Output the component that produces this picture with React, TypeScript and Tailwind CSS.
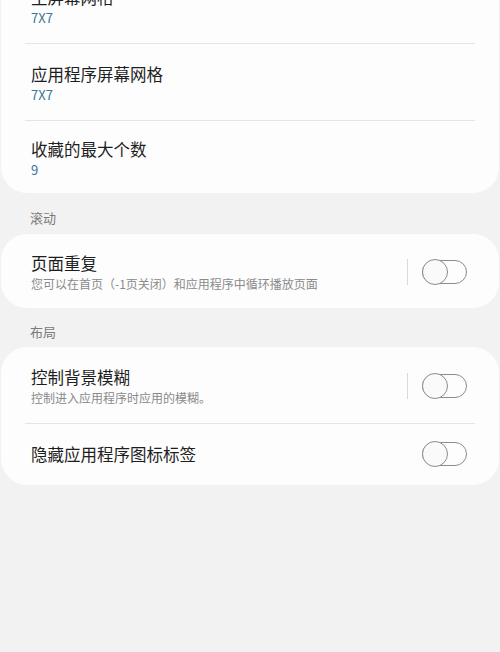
import React from 'react'

const font = { fontFamily: '"Noto Sans CJK SC", "Noto Sans", sans-serif' }

function Toggle({ divider }: { divider?: boolean }) {
  return (
    <div className="flex items-center shrink-0">
      {divider && <div className="w-px h-[26px] bg-[#d9d9d9] mr-[14px]" />}
      <div className="relative w-[45px] h-[26px] flex items-center">
        <div className="absolute left-0 right-0 h-[24px] rounded-full border-[1.5px] border-[#8c8c8c]" />
        <div className="absolute left-0 w-[26px] h-[26px] rounded-full border-[1.5px] border-[#8c8c8c] bg-[#fafafa]" />
      </div>
    </div>
  )
}

function Divider() {
  return <div className="mx-[24px] h-px bg-[#e5e5e5]" />
}

function ValueItem({ title, value, className }: { title: string; value: string; className: string }) {
  return (
    <div className={`px-[30px] ${className}`}>
      <div className="text-[16.5px] leading-[24px] text-[#1e1e1e]">{title}</div>
      <div className="text-[13px] leading-[18px] text-[#3b7795]">{value}</div>
    </div>
  )
}

function SwitchItem({
  title,
  desc,
  divider,
  className,
}: {
  title: string
  desc?: string
  divider?: boolean
  className: string
}) {
  return (
    <div className={`flex items-center pl-[30px] pr-[32px] ${className}`}>
      <div className="flex-1 min-w-0">
        <div className="text-[16.5px] leading-[24px] text-[#1e1e1e]">{title}</div>
        {desc && <div className="text-[12px] leading-[18px] text-[#8a8a8a]">{desc}</div>}
      </div>
      <Toggle divider={divider} />
    </div>
  )
}

function Header({ label, className }: { label: string; className: string }) {
  return <div className={`px-[30px] text-[13px] leading-[18px] text-[#7a7a7a] ${className}`}>{label}</div>
}

export default function App() {
  return (
    <div className="w-[500px] h-[652px] overflow-hidden bg-[#f2f2f2]" style={font}>
      <div className="mx-[1px] -mt-[33px] bg-[#fdfdfd] rounded-[26px]">
        <ValueItem title="主屏幕网格" value="7X7" className="pt-[18px] pb-[16px]" />
        <Divider />
        <ValueItem title="应用程序屏幕网格" value="7X7" className="pt-[18px] pb-[16px]" />
        <Divider />
        <ValueItem title="收藏的最大个数" value="9" className="pt-[16px] pb-[14px]" />
      </div>

      <Header label="滚动" className="pt-[16px] pb-[7px]" />
      <div className="mx-[1px] bg-[#fdfdfd] rounded-[26px]">
        <SwitchItem
          title="页面重复"
          desc="您可以在首页（-1页关闭）和应用程序中循环播放页面"
          divider
          className="pt-[17px] pb-[15px]"
        />
      </div>

      <Header label="布局" className="pt-[15px] pb-[6px]" />
      <div className="mx-[1px] bg-[#fdfdfd] rounded-[26px]">
        <SwitchItem
          title="控制背景模糊"
          desc="控制进入应用程序时应用的模糊。"
          divider
          className="pt-[18px] pb-[16px]"
        />
        <Divider />
        <SwitchItem title="隐藏应用程序图标标签" className="pt-[17px] pb-[18px]" />
      </div>
    </div>
  )
}
